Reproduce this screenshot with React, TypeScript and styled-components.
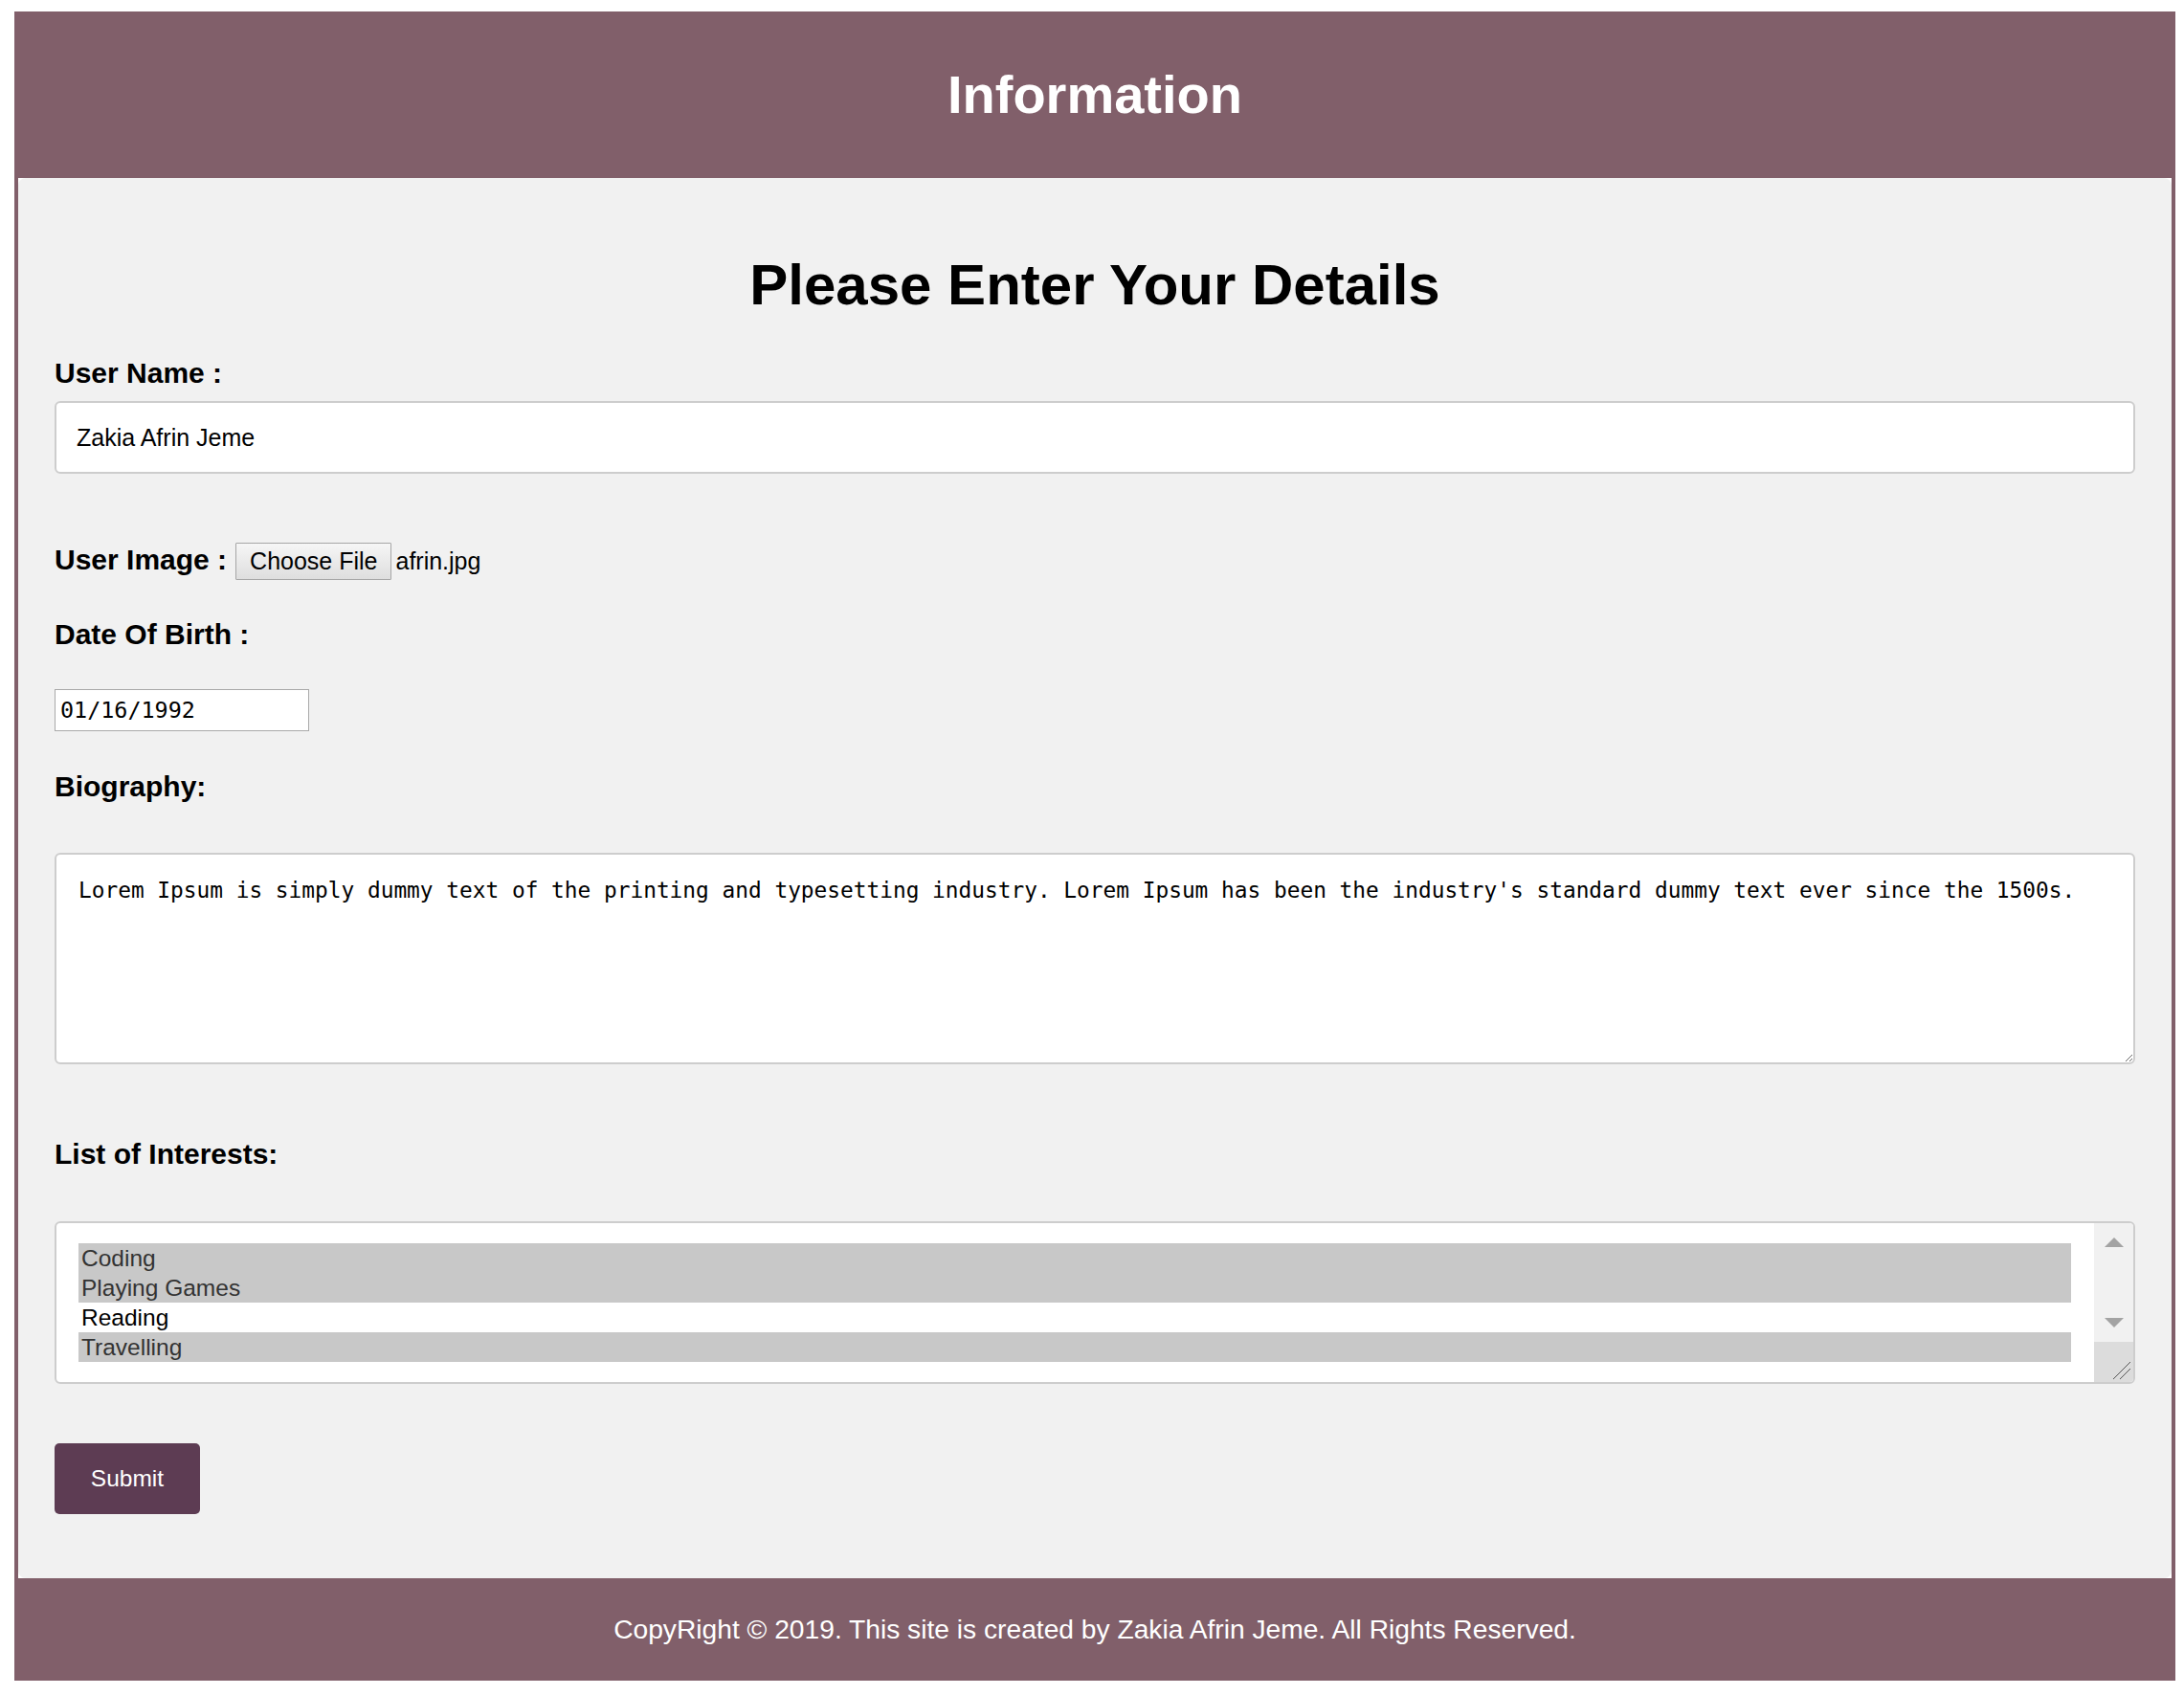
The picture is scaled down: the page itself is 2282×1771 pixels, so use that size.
import React from "react";
import styled, { createGlobalStyle } from "styled-components";

const GlobalStyle = createGlobalStyle`
  html, body {
    margin: 0;
    padding: 0;
    background: #ffffff;
  }
  body {
    font-family: "Liberation Sans", Arial, sans-serif;
  }
  * { box-sizing: border-box; }
`;

const Page = styled.div`
  padding: 12px 9px 15px 15px;
`;

const Frame = styled.div`
  background: #815f6a;
  display: flex;
  flex-direction: column;
`;

const Header = styled.header`
  height: 174px;
  display: flex;
  align-items: center;
  justify-content: center;
`;

const HeaderTitle = styled.h1`
  margin: 0;
  color: #ffffff;
  font-family: "Liberation Sans", Arial, sans-serif;
  font-weight: 700;
  font-size: 56px;
  line-height: 64px;
`;

const Main = styled.main`
  margin: 0 4px;
  background: #ffffff;
`;

const Card = styled.form`
  background: #f1f1f1;
  border-radius: 8px;
  padding: 77px 38px 67px 38px;
  display: flex;
  flex-direction: column;
  align-items: flex-start;
`;

const Title = styled.h2`
  align-self: stretch;
  margin: 0;
  text-align: center;
  font-size: 60px;
  line-height: 70px;
  font-weight: 700;
  color: #000;
`;

const Label = styled.label<{ $gap: number }>`
  display: block;
  margin-top: ${(p) => p.$gap}px;
  font-size: 30px;
  line-height: 36px;
  font-weight: 700;
  color: #000;
`;

const TextInput = styled.input<{ $gap: number }>`
  align-self: stretch;
  margin-top: ${(p) => p.$gap}px;
  height: 76px;
  border: 2px solid #cdcdcd;
  border-radius: 6px;
  background: #fff;
  padding: 0 21px;
  font-family: "Liberation Sans", Arial, sans-serif;
  font-size: 25px;
  color: #000;
  outline: none;
`;

const FileRow = styled.div<{ $gap: number }>`
  margin-top: ${(p) => p.$gap}px;
  display: flex;
  align-items: baseline;
`;

const InlineLabel = styled.span`
  font-size: 30px;
  line-height: 36px;
  font-weight: 700;
  color: #000;
  margin-right: 9px;
`;

const FileButton = styled.button`
  height: 39px;
  padding: 0 14px;
  border: 1px solid #a6a6a6;
  border-radius: 1px;
  background: linear-gradient(#f6f6f6, #dedede);
  font-family: "Liberation Sans", Arial, sans-serif;
  font-size: 25px;
  color: #000;
`;

const FileName = styled.span`
  margin-left: 4px;
  font-size: 25px;
  color: #000;
`;

const DateInput = styled.input<{ $gap: number }>`
  margin-top: ${(p) => p.$gap}px;
  width: 266px;
  height: 44px;
  border: 1px solid #a9a9a9;
  background: #fff;
  padding: 0 5px;
  font-family: "DejaVu Sans Mono", "Liberation Mono", monospace;
  font-size: 23.4px;
  color: #000;
  outline: none;
`;

const TextArea = styled.textarea<{ $gap: number }>`
  align-self: stretch;
  margin-top: ${(p) => p.$gap}px;
  height: 221px;
  border: 2px solid #cdcdcd;
  border-radius: 6px;
  background: #fff;
  padding: 24px 23px 20px 23px;
  font-family: "DejaVu Sans Mono", "Liberation Mono", monospace;
  font-size: 22.8px;
  line-height: 27px;
  color: #000;
  outline: none;
`;

const ListBox = styled.div<{ $gap: number }>`
  align-self: stretch;
  margin-top: ${(p) => p.$gap}px;
  height: 170px;
  border: 2px solid #cdcdcd;
  border-radius: 6px;
  background: #fff;
  display: flex;
  overflow: hidden;
`;

const Options = styled.ul`
  flex: 1;
  margin: 0;
  list-style: none;
  padding: 21px 24px 21px 23px;
`;

const Option = styled.li<{ $selected?: boolean }>`
  height: 31px;
  line-height: 31px;
  padding-left: 3px;
  font-size: 24.5px;
  background: ${(p) => (p.$selected ? "#c8c8c8" : "transparent")};
  color: ${(p) => (p.$selected ? "#333333" : "#000000")};
`;

const ScrollBar = styled.div`
  width: 41px;
  background: #f1f1f1;
  display: flex;
  flex-direction: column;
`;

const ScrollTrack = styled.div`
  flex: 1;
  display: flex;
  flex-direction: column;
  justify-content: space-between;
  align-items: center;
  padding: 15px 0 15px 0;
`;

const Resizer = styled.div`
  height: 42px;
  background: #dcdcdc;
  display: flex;
  align-items: flex-end;
  justify-content: flex-end;
  padding: 0 2px 2px 0;
`;

const SubmitButton = styled.button<{ $gap: number }>`
  margin-top: ${(p) => p.$gap}px;
  width: 152px;
  height: 74px;
  border: none;
  border-radius: 5px;
  background: #5d3c53;
  color: #fff;
  font-family: "Liberation Sans", Arial, sans-serif;
  font-size: 24.5px;
`;

const Footer = styled.footer`
  height: 107px;
  display: flex;
  align-items: center;
  justify-content: center;
  color: #fff;
  font-size: 28.2px;
`;

const Arrow = ({ up }: { up?: boolean }) => (
  <svg width="20" height="10" viewBox="0 0 20 10">
    <polygon points={up ? "10,0 20,10 0,10" : "0,0 20,0 10,10"} fill="#a3a3a3" />
  </svg>
);

const Grip = () => (
  <svg width="20" height="20" viewBox="0 0 20 20">
    <line x1="19" y1="1" x2="1" y2="19" stroke="#555" strokeWidth="1" />
    <line x1="19" y1="8" x2="8" y2="19" stroke="#555" strokeWidth="1" />
  </svg>
);

const interests = [
  { name: "Coding", selected: true },
  { name: "Playing Games", selected: true },
  { name: "Reading", selected: false },
  { name: "Travelling", selected: true },
];

const bio =
  "Lorem Ipsum is simply dummy text of the printing and typesetting industry. Lorem Ipsum has been the industry's standard dummy text ever since the 1500s.";

export default function App() {
  return (
    <>
      <GlobalStyle />
      <Page>
        <Frame>
          <Header>
            <HeaderTitle>Information</HeaderTitle>
          </Header>
          <Main>
            <Card onSubmit={(e) => e.preventDefault()}>
              <Title>Please Enter Your Details</Title>
              <Label $gap={39}>User Name :</Label>
              <TextInput $gap={11} type="text" defaultValue="Zakia Afrin Jeme" />
              <FileRow $gap={72}>
                <InlineLabel>User Image :</InlineLabel>
                <FileButton type="button">Choose File</FileButton>
                <FileName>afrin.jpg</FileName>
              </FileRow>
              <Label $gap={39}>Date Of Birth :</Label>
              <DateInput $gap={39} type="text" defaultValue="01/16/1992" />
              <Label $gap={40}>Biography:</Label>
              <TextArea $gap={51} defaultValue={bio} />
              <Label $gap={76}>List of Interests:</Label>
              <ListBox $gap={52}>
                <Options>
                  {interests.map((i) => (
                    <Option key={i.name} $selected={i.selected}>
                      {i.name}
                    </Option>
                  ))}
                </Options>
                <ScrollBar>
                  <ScrollTrack>
                    <Arrow up />
                    <Arrow />
                  </ScrollTrack>
                  <Resizer>
                    <Grip />
                  </Resizer>
                </ScrollBar>
              </ListBox>
              <SubmitButton $gap={62} type="submit">
                Submit
              </SubmitButton>
            </Card>
          </Main>
          <Footer>
            CopyRight © 2019. This site is created by Zakia Afrin Jeme. All Rights Reserved.
          </Footer>
        </Frame>
      </Page>
    </>
  );
}
